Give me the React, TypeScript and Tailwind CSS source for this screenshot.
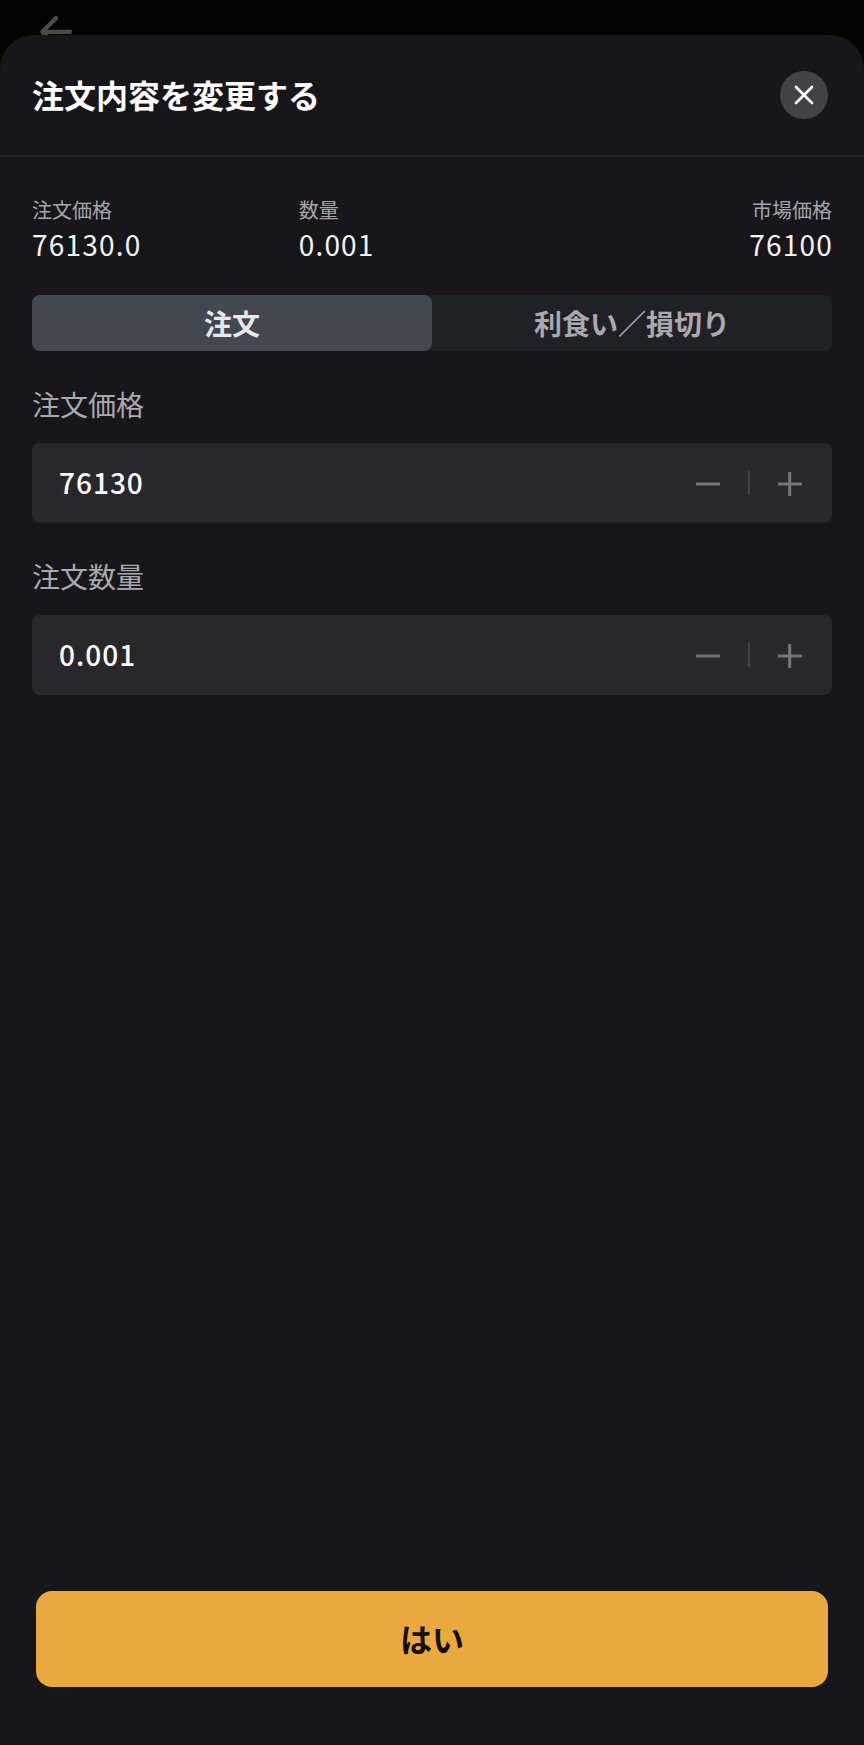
import React, { useState } from "react";

const summary = [
  { label: "注文価格", value: "76130.0", align: "items-start", valueClass: "" },
  { label: "数量", value: "0.001", align: "items-start", valueClass: "" },
  { label: "市場価格", value: "76100", align: "items-end", valueClass: "-mr-px" },
];

const tabs = ["注文", "利食い／損切り"];

const MinusIcon = () => (
  <svg width="24" height="26" viewBox="0 0 24 26" stroke="currentColor" strokeWidth="3">
    <path d="M0 14h24" />
  </svg>
);

const PlusIcon = () => (
  <svg width="24" height="26" viewBox="0 0 24 26" stroke="currentColor" strokeWidth="3">
    <path d="M0 14h24M11.7 2v24" />
  </svg>
);

interface StepperFieldProps {
  label: string;
  value: number;
  step: number;
  digits: number;
  onChange: (value: number) => void;
}

/**
 * Labelled number with minus / plus buttons
 */
const StepperField: React.FC<StepperFieldProps> = ({ label, value, step, digits, onChange }) => {
  return (
    <div>
      <div className="h-9 text-[28px] leading-9 text-[#a9a9ad]">{label}</div>
      <div className="mt-[21px] flex h-20 items-center rounded-lg bg-[#28282c] pr-[30px] pl-[27px]">
        <span className="flex-1 pb-[2px] text-[28px] leading-9 font-medium tracking-[1px] text-white">
          {value.toFixed(digits)}
        </span>
        <button aria-label="減らす" className="text-[#76767a]" onClick={() => onChange(value - step)}>
          <MinusIcon />
        </button>
        <span className="mr-[28px] ml-7 h-6 w-[2px] bg-[#434347]" />
        <button aria-label="増やす" className="text-[#76767a]" onClick={() => onChange(value + step)}>
          <PlusIcon />
        </button>
      </div>
    </div>
  );
};

export default function App() {
  const [activeTab, setActiveTab] = useState(0);
  const [price, setPrice] = useState(76130);
  const [amount, setAmount] = useState(0.001);

  return (
    <div
      lang="ja"
      className="flex h-[1745px] w-[864px] flex-col overflow-hidden bg-[#030303] font-['Noto_Sans_CJK_JP',sans-serif]"
    >
      {/* Screen behind the sheet */}
      <div className="h-[35px] shrink-0 overflow-hidden pl-9">
        <svg
          width="40"
          height="50"
          viewBox="0 0 40 50"
          fill="none"
          stroke="#4b4b4b"
          strokeWidth="4.2"
          strokeLinecap="round"
          strokeLinejoin="round"
        >
          <path d="M34 31.8H6.5L20 18M6.5 31.8L20 46" />
        </svg>
      </div>

      {/* Bottom sheet */}
      <div className="flex flex-1 flex-col rounded-t-[34px] bg-[#17171b]">
        <div className="flex h-[122px] items-center justify-between border-b-2 border-[#27272b] pr-9 pl-8">
          <h1 className="pb-[3px] text-[32px] leading-10 font-bold text-white">注文内容を変更する</h1>
          <button
            aria-label="閉じる"
            className="flex size-12 items-center justify-center rounded-full bg-[#434347] text-white"
          >
            <svg
              width="20"
              height="20"
              viewBox="0 0 20 20"
              stroke="currentColor"
              strokeWidth="2.6"
              strokeLinecap="round"
            >
              <path d="M2 2l16 16M18 2L2 18" />
            </svg>
          </button>
        </div>

        <div className="flex flex-1 flex-col px-8 pt-[39px]">
          {/* Order summary */}
          <div className="grid grid-cols-3">
            {summary.map((item) => (
              <div key={item.label} className={`flex flex-col ${item.align}`}>
                <span className="text-[20px] leading-7 text-[#a5a5a9]">{item.label}</span>
                <span
                  className={`mt-[2px] text-[28px] leading-9 tracking-[1.2px] text-[#f5f5f7] ${item.valueClass}`}
                >
                  {item.value}
                </span>
              </div>
            ))}
          </div>

          {/* Tabs */}
          <div className="mt-[33px] flex h-14 rounded-lg bg-[#202127]">
            {tabs.map((tab, index) => (
              <button
                key={tab}
                onClick={() => setActiveTab(index)}
                className={`flex-1 rounded-lg text-[28px] leading-9 font-bold ${
                  activeTab === index ? "bg-[#434750] text-[#e6e8ee]" : "text-[#a8a8ad]"
                }`}
              >
                {tab}
              </button>
            ))}
          </div>

          {/* Fields */}
          <div className="mt-[35px] flex flex-col gap-[35px]">
            <StepperField label="注文価格" value={price} step={1} digits={0} onChange={setPrice} />
            <StepperField label="注文数量" value={amount} step={0.001} digits={3} onChange={setAmount} />
          </div>

          <div className="mt-auto px-1 pb-[58px]">
            <button className="h-24 w-full rounded-2xl bg-[#eaa93e] pb-[2px] text-[32px] leading-10 font-bold text-[#170f06]">
              はい
            </button>
          </div>
        </div>
      </div>
    </div>
  );
}
